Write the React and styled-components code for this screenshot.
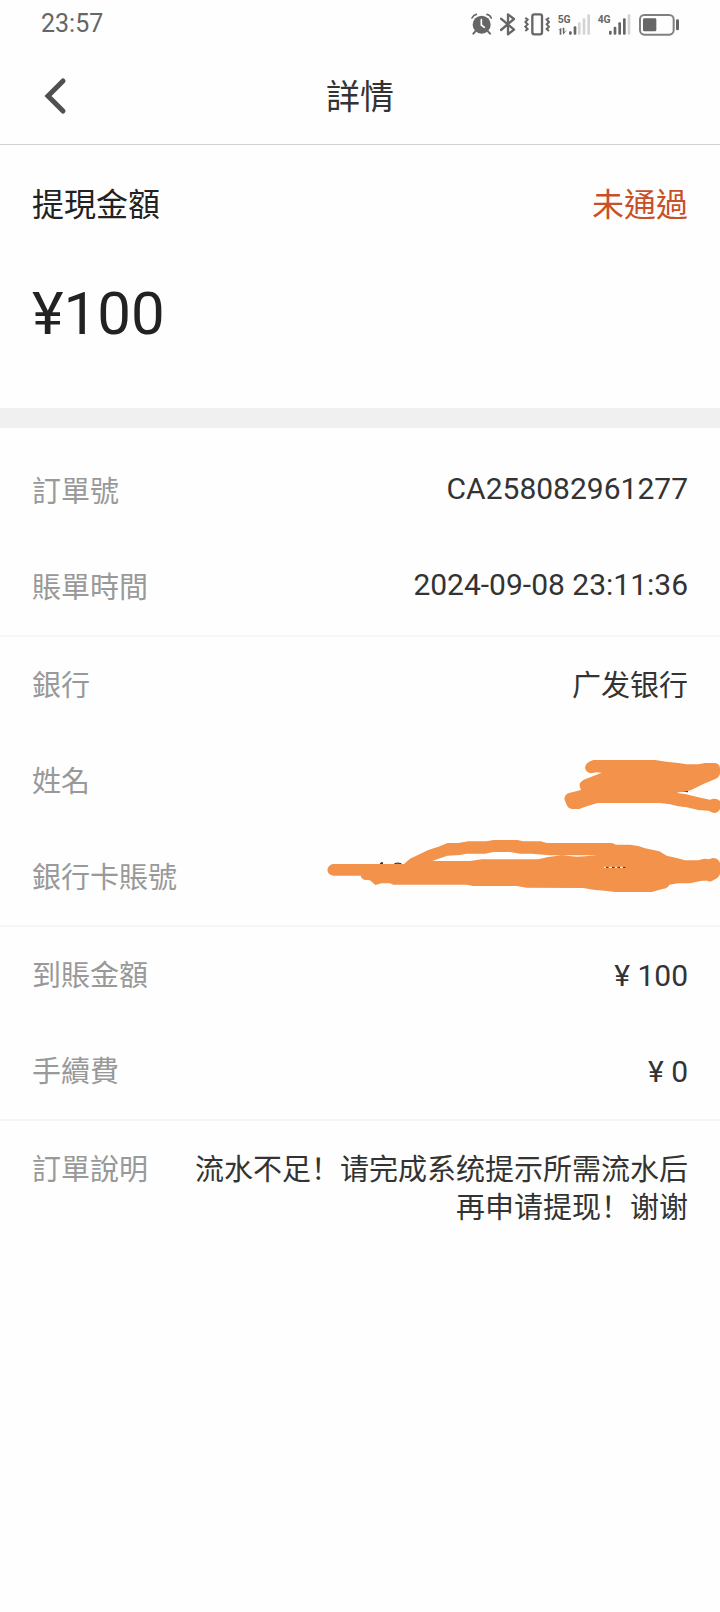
import React from "react"
import styled, { createGlobalStyle } from "styled-components"

const GlobalStyle = createGlobalStyle`
  * {
    box-sizing: border-box;
  }
  body {
    margin: 0;
    background: #fefefe;
    color: #333;
    font-family: Roboto, "Noto Sans CJK TC", sans-serif;
  }
`
const StatusBar = styled.div`
  display: flex;
  justify-content: space-between;
  align-items: center;
  height: 48px;
  padding: 0 41px;
  color: #666;
`
const Clock = styled.time`
  font-size: 25px;
  line-height: 32px;
`
const StatusIcons = styled.div`
  display: flex;
  gap: 8px;
  svg {
    display: block;
  }
`
const Header = styled.header`
  display: grid;
  grid-template-columns: 1fr auto 1fr;
  align-items: center;
  height: 97px;
  border-bottom: 1px solid #d2d2d2;
`
const BackButton = styled.button`
  justify-self: start;
  display: flex;
  margin-left: 32px;
  padding: 8px;
  border: none;
  background: none;
  color: #505050;
  cursor: pointer;
`
const Title = styled.h1`
  margin: 0;
  padding-top: 2px;
  font-size: 34px;
  font-weight: 400;
  line-height: 40px;
`
const Summary = styled.section`
  padding: 40px 32px 64px;
  border-bottom: 20px solid #f0f0f0;
`
const SummaryHead = styled.div`
  display: flex;
  justify-content: space-between;
  font-size: 32px;
  line-height: 40px;
`
const SummaryLabel = styled.h2`
  margin: 0;
  font-size: inherit;
  font-weight: 400;
  color: #222;
`
const Status = styled.span`
  color: #c94f2b;
`
const Amount = styled.p`
  margin: 59px 0 0;
  font-size: 60px;
  line-height: 60px;
  color: #222;
`
const Details = styled.main`
  padding-top: 15px;
`
const Group = styled.dl`
  margin: 0;
  & + & {
    border-top: 2px solid #f5f7f7;
  }
`
const Row = styled.div`
  position: relative;
  display: flex;
  justify-content: space-between;
  align-items: flex-start;
  gap: 32px;
  padding: 30px 32px 28px;
  font-size: 29px;
  line-height: 38px;
`
const Label = styled.dt`
  flex-shrink: 0;
  color: #999;
`
const Value = styled.dd`
  margin: 0;
  text-align: right;
  font-family: Roboto, "Noto Sans CJK SC", sans-serif;
  font-size: ${({ $numeric }) => ($numeric ? "30px" : "29px")};
  line-height: ${({ $compact }) => ($compact ? "32px" : "38px")};
`
// marker strokes lie over the private values and run to the screen edge
const Scribble = styled.svg`
  position: absolute;
  top: 0;
  right: 0;
`

const AlarmIcon = () => (
  <svg width="21" height="24" viewBox="33 35 63 72" fill="none" stroke="currentColor" strokeLinecap="round">
    <circle cx="65" cy="73" r="27" fill="currentColor" stroke="none" />
    <path d="M36 53q4-9 13-11M81 42q9 2 13 11" strokeWidth="5" />
    <path d="M46 93l-6 7M84 93l6 7" strokeWidth="6" />
    <path d="M64 58v16l9 7" stroke="#fefefe" strokeWidth="5" />
  </svg>
)

const BluetoothIcon = () => (
  <svg width="16" height="24" viewBox="120 35 48 72" fill="none" stroke="currentColor">
    <path d="M123 55l39 33-18 14V42l18 14-39 33" strokeWidth="7" strokeLinejoin="round" strokeLinecap="round" />
  </svg>
)

const VibrateIcon = () => (
  <svg width="26" height="24" viewBox="192 35 78 72" fill="none" stroke="currentColor" strokeWidth="7">
    <rect x="217" y="42" width="29" height="60" rx="6" />
    <path
      d="M196 52l7 6-7 7 7 7-7 7 7 7-7 6M267 52l-7 6 7 7-7 7 7 7-7 7 7 6"
      strokeWidth="6"
    />
  </svg>
)

const SignalText = styled.text`
  font-family: Roboto, sans-serif;
  font-size: 31px;
  font-weight: 700;
`

const Signal5G = () => (
  <svg width="32" height="24" viewBox="294 35 96 72" fill="currentColor">
    <SignalText x="293" y="67">5G</SignalText>
    <path d="M294 90l10-8v21h-5V88zM308 82h5v13l9-7-13 15z" />
    <rect x="327" y="93" width="8" height="10" rx="3" />
    <rect x="341" y="78" width="8" height="25" rx="3" />
    <g fill="#d4d4d4">
      <rect x="354" y="66" width="8" height="37" rx="3" />
      <rect x="368" y="54" width="8" height="49" rx="3" />
      <rect x="382" y="42" width="8" height="61" rx="3" />
    </g>
  </svg>
)

const Signal4G = () => (
  <svg width="33" height="24" viewBox="414 35 99 72" fill="currentColor">
    <SignalText x="413" y="67">4G</SignalText>
    <rect x="447" y="91" width="8" height="12" rx="3" />
    <rect x="461" y="79" width="8" height="24" rx="3" />
    <rect x="475" y="66" width="8" height="37" rx="3" />
    <rect x="489" y="54" width="8" height="49" rx="3" />
    <rect x="503" y="42" width="8" height="61" rx="3" fill="#d4d4d4" />
  </svg>
)

const BatteryIcon = () => (
  <svg width="40" height="24" viewBox="537 35 120 72" fill="currentColor">
    <rect x="540" y="44" width="101" height="59" rx="13" fill="none" stroke="#808080" strokeWidth="6" />
    <rect x="549" y="54" width="40" height="39" rx="4" />
    <rect x="648" y="57" width="9" height="33" rx="4" />
  </svg>
)

const NameScribble = () => (
  <Scribble width="410" height="96" viewBox="0 -21 1230 288" aria-hidden="true">
    <path d="M1090 157q20-6 44-3" stroke="#333" strokeWidth="5" fill="none" />
    <path
      fill="#f2924b"
      d="M850 60H1035L1070 65L1105 69L1130 73H1165L1185 69H1214Q1230 71 1230 86V99Q1229 111 1216 117L1180 132L1145 149Q1135 154 1122 155L1095 158L1125 162L1165 172L1200 179L1210 176Q1222 175 1230 183V207Q1223 220 1211 219L1195 212L1165 210L1130 202L1105 199L1080 193L1050 189H863L830 199L808 207H785Q772 205 768 190L763 177Q764 161 780 158L813 150Q805 135 812 127Q817 120 835 114L875 98L860 97L843 100Q825 97 825 81Q828 66 850 60Z"
    />
  </Scribble>
)

const CardScribble = () => (
  <Scribble width="410" height="96" viewBox="0 267 1230 288" aria-hidden="true">
    <path d="M210 372l3-4h5l-1 4M253 371q10-4 21 0" fill="#333" stroke="#333" strokeWidth="3" />
    <path
      fill="#f2924b"
      fillRule="evenodd"
      d="M70 372H282L300 356L325 344L355 330L385 320L413 309L445 309L475 304H530L550 300H622L640 304H692L710 309H906L918 314H960L985 318L1005 325L1030 330L1048 334L1070 347L1100 354L1125 361H1165L1183 356L1197 358L1208 354Q1225 354 1230 369V402Q1225 416 1211 420Q1199 428 1193 422L1175 422L1140 430H1105L1078 434Q1073 445 1060 446L1025 456H915L885 452L855 450L820 444L650 443L620 438H490L470 434H250L240 430H215L196 435L180 421L162 419Q153 416 152 407H70Q54 405 52 390Q55 374 70 372ZM367 363L480 363L515 358H685L715 351L755 346L800 350L825 349L862 346H720L665 341H630L600 336H550L525 341H470L450 345L412 347L390 355Z"
    />
    <path d="M882 382h66" stroke="#fff" strokeWidth="3" />
    <path d="M888 382h8M906 382h8M922 382h8M939 382h8" stroke="#222" strokeWidth="3" />
  </Scribble>
)

const groups = [
  [
    { label: "訂單號", value: "CA258082961277", numeric: true, compact: true },
    { label: "賬單時間", value: "2024-09-08 23:11:36", numeric: true, compact: true },
  ],
  [
    { label: "銀行", value: "广发银行" },
    { label: "姓名", mask: <NameScribble /> },
    { label: "銀行卡賬號", mask: <CardScribble /> },
  ],
  [
    { label: "到賬金額", value: "¥ 100", numeric: true },
    { label: "手續費", value: "¥ 0", numeric: true },
  ],
  [{ label: "訂單說明", value: "流水不足！请完成系统提示所需流水后再申请提现！谢谢" }],
]

const App = () => {
  return (
    <>
      <GlobalStyle />
      <StatusBar>
        <Clock>23:57</Clock>
        <StatusIcons>
          <AlarmIcon />
          <BluetoothIcon />
          <VibrateIcon />
          <Signal5G />
          <Signal4G />
          <BatteryIcon />
        </StatusIcons>
      </StatusBar>
      <Header>
        <BackButton type="button" aria-label="返回">
          <svg width="32" height="40" viewBox="0 0 32 40" fill="none" stroke="currentColor" strokeWidth="5">
            <path d="M23 5L8 20l15 15" strokeLinecap="round" />
          </svg>
        </BackButton>
        <Title>詳情</Title>
      </Header>
      <Summary>
        <SummaryHead>
          <SummaryLabel>提現金額</SummaryLabel>
          <Status>未通過</Status>
        </SummaryHead>
        <Amount>¥100</Amount>
      </Summary>
      <Details>
        {groups.map((rows) => (
          <Group key={rows[0].label}>
            {rows.map(({ label, value, mask, numeric, compact }) => (
              <Row key={label}>
                <Label>{label}</Label>
                <Value $numeric={numeric} $compact={compact}>
                  {value}
                  {mask}
                </Value>
              </Row>
            ))}
          </Group>
        ))}
      </Details>
    </>
  )
}

export default App
